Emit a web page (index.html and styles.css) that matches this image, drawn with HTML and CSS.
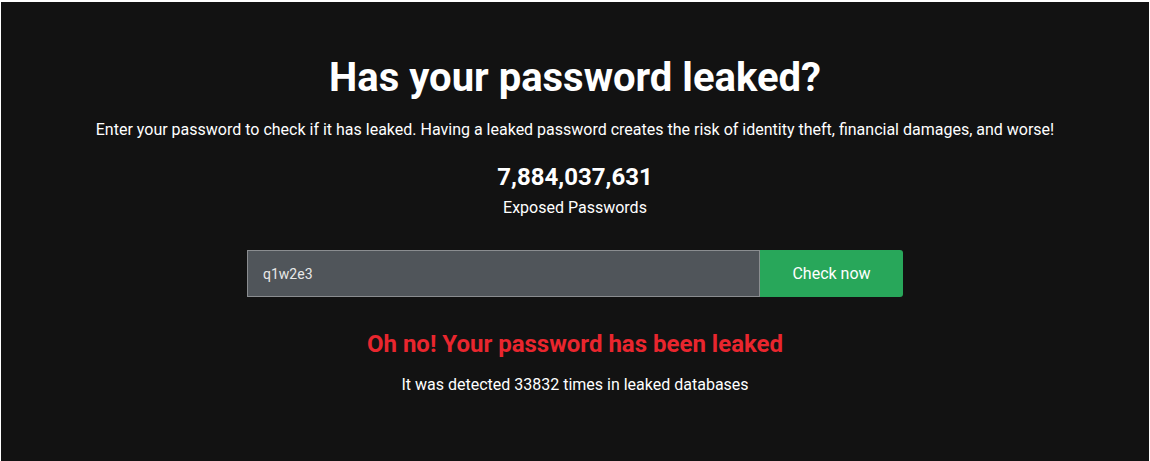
FILE: index.html
```html
<!DOCTYPE html>
<html>
<head>
<meta charset="utf-8">
<link rel="stylesheet" href="styles.css">
</head>
<body>
<section class="hero">
  <h1 class="title">Has your password leaked?</h1>
  <p class="lead">Enter your password to check if it has leaked. Having a leaked password creates the risk of identity theft, financial damages, and worse!</p>
  <div class="stat">
    <div class="stat-num">7,884,037,631</div>
    <div class="stat-label">Exposed Passwords</div>
  </div>
  <form class="check">
    <input class="check-input" type="text" value="q1w2e3">
    <button class="check-btn" type="button">Check now</button>
  </form>
  <h2 class="result">Oh no! Your password has been leaked</h2>
  <p class="result-sub">It was detected 33832 times in leaked databases</p>
</section>
</body>
</html>
```
FILE: styles.css
```css
html, body {
  margin: 0;
  padding: 0;
  background: #ffffff;
}
body {
  padding: 2px 1px 0 1px;
  font-family: Roboto, "Liberation Sans", sans-serif;
}
.hero {
  background: #121212;
  color: #ffffff;
  height: 459px;
  box-sizing: border-box;
  padding-top: 48px;
  display: flex;
  flex-direction: column;
  align-items: center;
  text-align: center;
}
.title {
  margin: 0;
  font-size: 40px;
  font-weight: 700;
  line-height: 56px;
}
.lead {
  margin: 12px 0 0;
  font-size: 16px;
  line-height: 24px;
}
.stat {
  margin-top: 20px;
}
.stat-num {
  font-size: 24px;
  font-weight: 700;
  line-height: 30px;
}
.stat-label {
  font-size: 16px;
  line-height: 24px;
  margin-top: 4px;
}
.check {
  margin: 30px 0 0;
  display: flex;
}
.check-input {
  width: 513px;
  height: 47px;
  box-sizing: border-box;
  background: #50555a;
  border: 1px solid #8a8d90;
  border-radius: 0;
  color: #e8e8e8;
  font-family: Roboto, "Liberation Sans", sans-serif;
  font-size: 14px;
  padding: 0 15px;
  outline: none;
}
.check-btn {
  width: 143px;
  height: 47px;
  border: none;
  background: #28a75a;
  color: #ffffff;
  font-family: Roboto, "Liberation Sans", sans-serif;
  font-size: 16px;
  font-weight: 400;
  border-radius: 0 3px 3px 0;
}
.result {
  margin: 32px 0 0;
  color: #e9262e;
  font-size: 24px;
  font-weight: 700;
  line-height: 30px;
}
.result-sub {
  margin: 14px 0 0;
  font-size: 16px;
  line-height: 24px;
}
```
